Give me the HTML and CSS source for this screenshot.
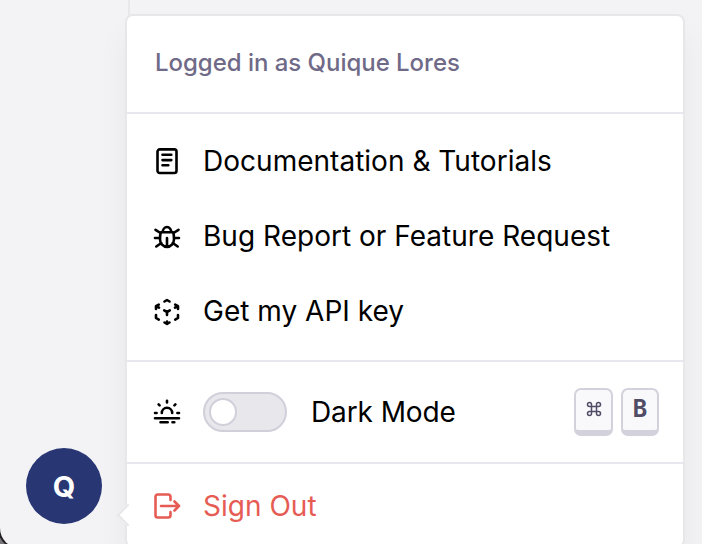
FILE: index.html
```html
<!DOCTYPE html>
<html lang="en">
<head>
<meta charset="utf-8">
<title>Account menu</title>
<link rel="stylesheet" href="styles.css">
</head>
<body>
<div class="app">
  <aside class="sidebar"><button class="avatar">Q</button></aside>
  <nav class="menu">
    <span class="pointer"></span>
    <header class="account">Logged in as Quique Lores</header>
    <section class="links">
      <a class="item">
        <svg class="icon" viewBox="0 0 28 28"><rect x="4.500" y="1.400" width="19" height="23.600" rx="2.200"/><path d="M9.5 6.8h8.800M9.5 12.100h8.800M9.5 17.300h5.800"/></svg>
        <span>Documentation &amp; Tutorials</span>
      </a>
      <a class="item">
        <svg class="icon" viewBox="0 0 28 28"><path d="M9.8 9a4.2 5 0 0 1 8.4 0M7.8 9.2h12.4Q21 11.5 21 16.2a7 7.7 0 0 1-14 0Q7 11.5 7.8 9.2ZM14 15v8M2.5 6.8l5 3.2M25.5 6.8l-5 3.2M2 15h5M26 15h-5M3.3 23.5l5-3.5M24.700 23.500l-5-3.5"/></svg>
        <span>Bug Report or Feature Request</span>
      </a>
      <a class="item">
        <svg class="icon" viewBox="0 0 28 28"><path d="M11.500 3.500 14 2l2.500 1.500M5.800 6.600 3 8.200v2.700M3.300 8.200l2.700 1.500M22.200 6.600 25 8.200v2.700M24.700 8.200 22 9.700M3 17v3l2.800 1.700M25 17v3l-2.800 1.700M11.500 24.500 14 26l2.500-1.500M14 26v-2.500M11.200 12.400 14 14l2.800-1.600M14 14v3"/></svg>
        <span>Get my API key</span>
      </a>
    </section>
    <section class="mode">
      <svg class="icon" viewBox="0 0 28 28"><path d="M8.800 15a5.200 5.200 0 0 1 10.400 0M14 2.800v1.600M5.600 6.300l1 1M22.400 6.300l-1 1M2 15h1.600M24.400 15H26M2 20.300h24M7.500 24.300h7.200M19.500 24.300h1.800"/></svg>
      <span class="switch"><span class="knob"></span></span>
      <span class="mode-label">Dark Mode</span>
      <span class="keys"><kbd class="key"><svg class="command" viewBox="0 0 16 16"><path d="M5.500 5.500h5v5h-5zM5.500 5.500H3.500a2 2 0 1 1 2-2zM10.500 5.500v-2a2 2 0 1 1 2 2zM10.500 10.500h2a2 2 0 1 1-2 2zM5.500 10.500v2a2 2 0 1 1-2-2z"/></svg></kbd><kbd class="key">B</kbd></span>
    </section>
    <a class="item signout">
      <svg class="icon" viewBox="0 0 28 28"><path d="M17.500 8V4.800q0-2.300-2.300-2.300H4.800Q2.500 2.500 2.500 4.800v18.400q0 2.300 2.300 2.300h10.400q2.300 0 2.300-2.300V20M8 14h18M21.500 9.500 26 14l-4.500 4.500"/></svg>
      <span>Sign Out</span>
    </a>
  </nav>
</div>
</body>
</html>
```

FILE: styles.css
```css
* { box-sizing: border-box; }
body {
  margin: 0;
  height: 544px;
  overflow: hidden;
  background: #77767a;
  font-family: Inter, "Liberation Sans", sans-serif;
  color: #000;
}
.app {
  display: flex;
  height: 548px;
  background: #f3f3f5;
  border-bottom-left-radius: 20px;
  box-shadow: 0 0 0 2px #242126;
}
.sidebar {
  flex: none;
  display: flex;
  align-items: flex-end;
  width: 130px;
  padding: 0 0 24px 26px;
  border-right: 2px solid #e8e8eb;
}
.avatar {
  width: 76px;
  height: 76px;
  padding: 1px 0 0;
  border: 0;
  border-radius: 50%;
  background: #283674;
  color: #fff;
  font: 700 29px Inter, sans-serif;
}
.menu {
  position: relative;
  flex: none;
  width: 556px;
  height: 530px;
  margin: 16px 0 0 -3px;
  border-radius: 6px;
  background: #fff;
  box-shadow: 0 0 0 2px #e7e7ea, 0 18px 32px rgba(30, 30, 50, .06);
}
.pointer {
  position: absolute;
  left: -7px;
  top: 491px;
  width: 16px;
  height: 16px;
  background: #fff;
  border: solid #e7e7ea;
  border-width: 0 0 2px 2px;
  transform: rotate(45deg);
}
.account {
  height: 98px;
  padding: 0 28px 4px;
  border-bottom: 2px solid #e8e7ed;
  display: flex;
  align-items: center;
  font-size: 24px;
  font-weight: 500;
  letter-spacing: -.03px;
  color: #6f6a87;
}
.links {
  height: 248px;
  padding-top: 10px;
  border-bottom: 2px solid #e8e7ed;
}
.item {
  display: flex;
  align-items: center;
  gap: 22px;
  height: 75px;
  padding: 0 26px;
  font-size: 28px;
  letter-spacing: .02px;
  white-space: nowrap;
}
.links .item span { padding-bottom: 1px; }
.icon {
  flex: none;
  width: 28px;
  height: 28px;
  fill: none;
  stroke: currentColor;
  stroke-width: 2.6;
  stroke-linecap: round;
  stroke-linejoin: round;
}
.mode {
  display: flex;
  align-items: center;
  height: 102px;
  padding: 0 24px 0 26px;
  border-bottom: 2px solid #e8e7ed;
}
.switch {
  display: flex;
  align-items: center;
  width: 84px;
  height: 40px;
  margin: 0 24px 0 22px;
  padding-left: 4px;
  border: 2px solid #d1cfda;
  border-radius: 20px;
  background: #e8e7ec;
}
.knob {
  width: 28px;
  height: 28px;
  border: 2px solid #d1cfda;
  border-radius: 50%;
  background: #fff;
}
.mode-label { font-size: 28px; letter-spacing: -.1px; }
.keys { display: flex; gap: 8px; margin-left: auto; }
.key {
  display: flex;
  align-items: center;
  justify-content: center;
  width: 39px;
  height: 48px;
  padding-bottom: 2px;
  border: 2px solid #d3d1dc;
  border-bottom-width: 6px;
  border-radius: 7px;
  background: #f9f9fb;
  color: #514d66;
  font: 700 24px "DejaVu Sans Mono", monospace;
}
.key + .key { width: 38px; }
.command { width: 16px; height: 16px; fill: none; stroke: currentColor; stroke-width: 1.5; }
.signout { height: 82px; padding-top: 2px; color: #e65c54; }
```
